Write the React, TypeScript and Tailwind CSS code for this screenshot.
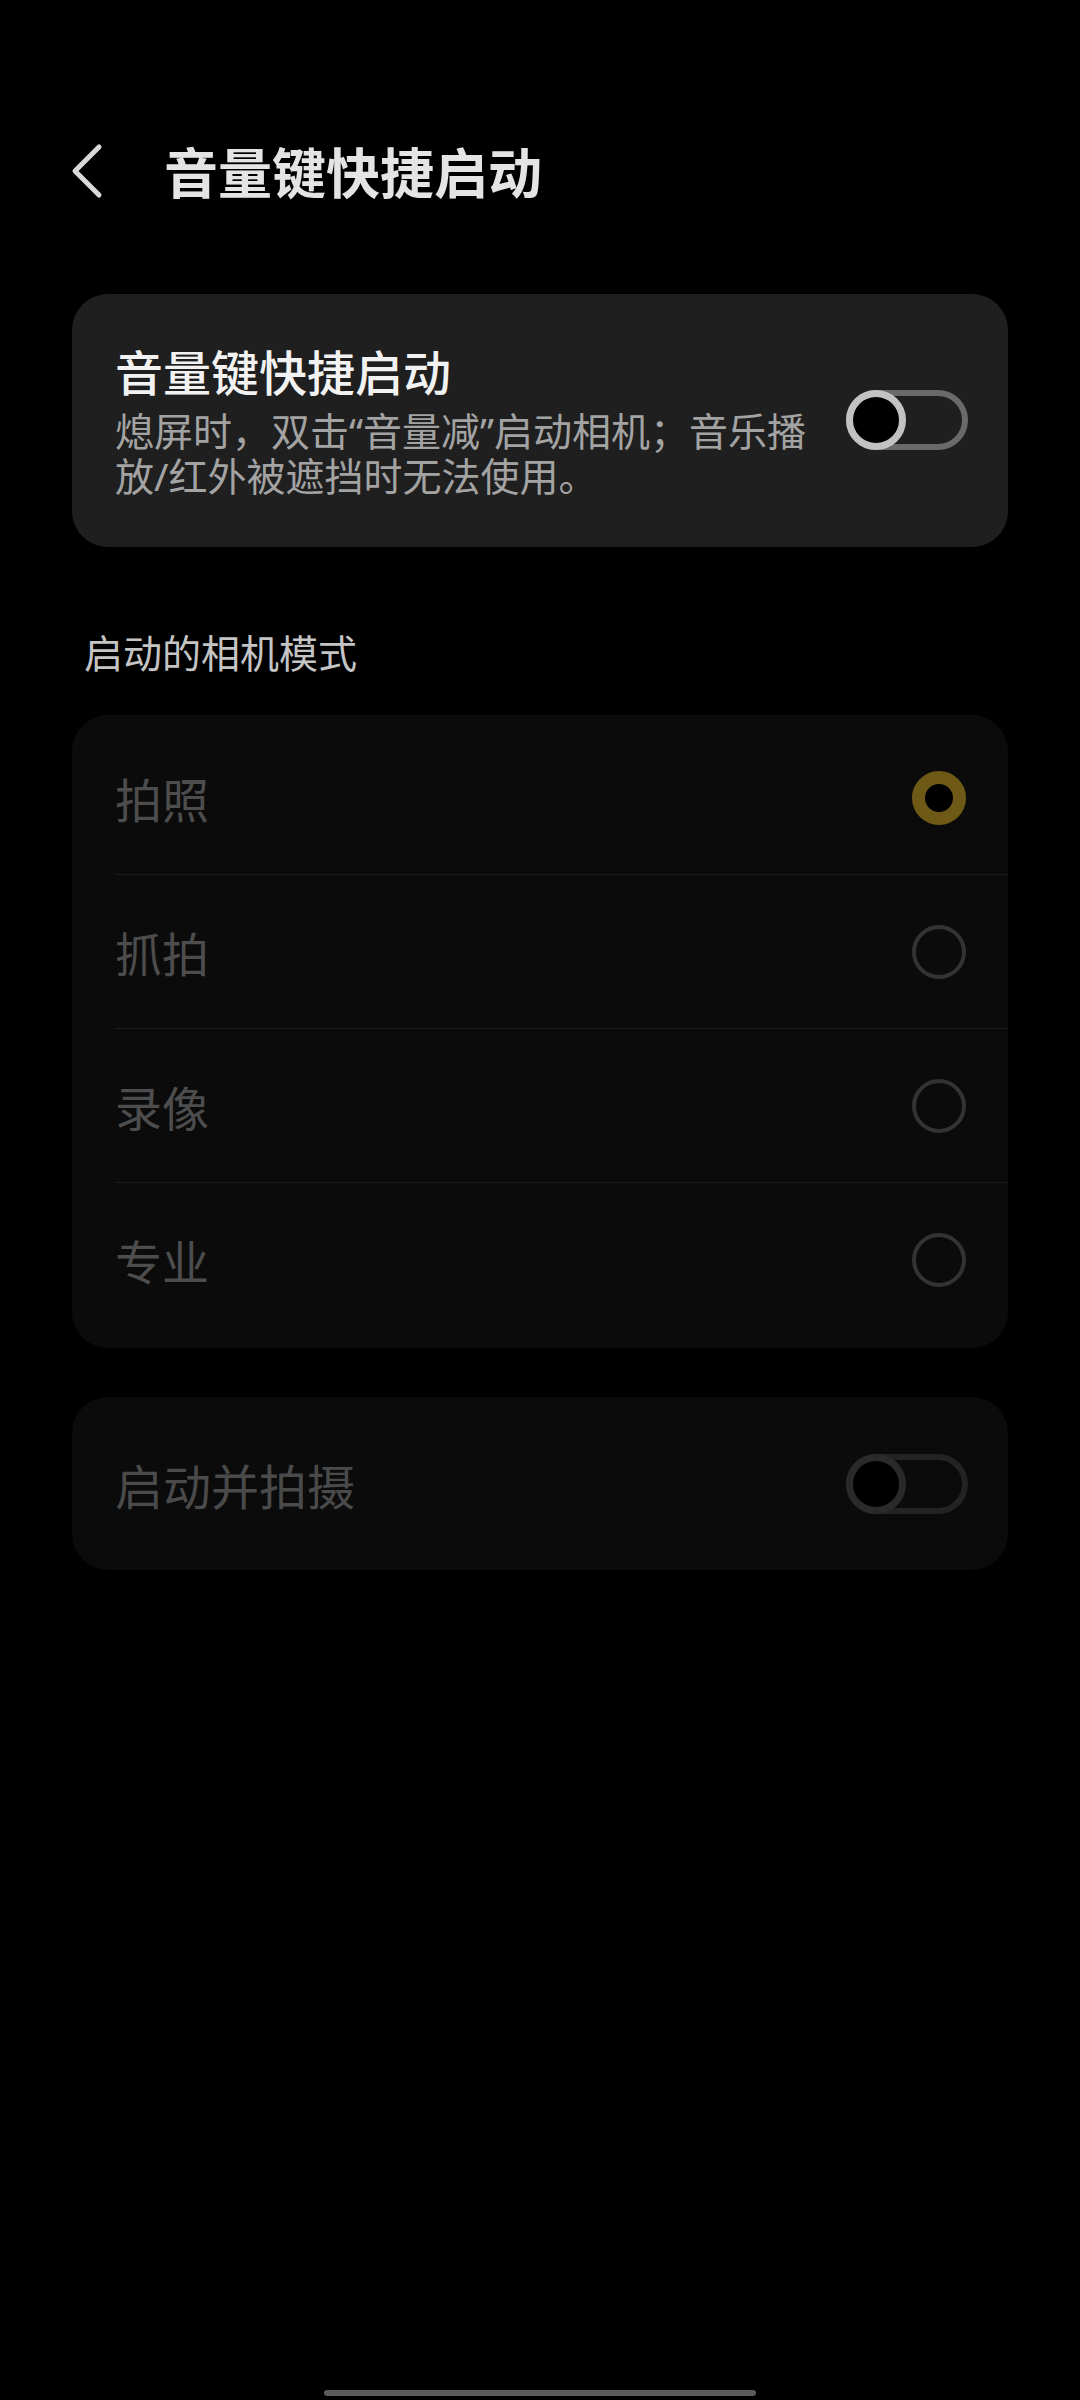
const font = { fontFamily: '"Noto Sans CJK SC", "Noto Sans", sans-serif' }
const descFont = { fontFamily: '"Noto Sans", "Noto Sans CJK SC", sans-serif' }

const modes = [
  { label: '拍照', selected: true },
  { label: '抓拍', selected: false },
  { label: '录像', selected: false },
  { label: '专业', selected: false },
]

function Toggle({ dim }: { dim?: boolean }) {
  return (
    <div
      className={`relative h-[60px] w-[122px] shrink-0 rounded-full border-[6px] ${
        dim ? 'border-[#232323]' : 'border-[#6a6a6a]'
      }`}
    >
      <div
        className={`absolute -left-[6px] -top-[6px] h-[60px] w-[60px] rounded-full border-[7px] bg-black ${
          dim ? 'border-[#2a2a2a]' : 'border-[#c2c2c2]'
        }`}
      />
    </div>
  )
}

function Radio({ selected }: { selected: boolean }) {
  return selected ? (
    <div className="h-[54px] w-[54px] rounded-full border-[13px] border-[#6e5a16] bg-black" />
  ) : (
    <div className="h-[54px] w-[54px] rounded-full border-[4px] border-[#333333]" />
  )
}

export default function App() {
  return (
    <div className="relative min-h-[2400px] w-[1080px] bg-black pt-[123px]" style={font}>
      <div className="flex h-[96px] items-center pl-[70px]">
        <svg width="34" height="56" viewBox="0 0 34 56" fill="none">
          <polyline
            points="29,4 5,28 29,52"
            stroke="#d9d9d9"
            strokeWidth="5"
            strokeLinecap="round"
            strokeLinejoin="round"
          />
        </svg>
        <h1 className="ml-[60px] text-[54px] font-bold leading-none text-[#e4e4e4]">音量键快捷启动</h1>
      </div>

      <div className="mx-[72px] mt-[75px] flex items-center justify-between rounded-[36px] bg-[#1f1f1f] pb-[49px] pl-[43px] pr-[40px] pt-[48px]">
        <div>
          <p className="text-[48px] font-medium leading-[56px] text-[#f2f2f2]">音量键快捷启动</p>
          <div className="mt-[10px] text-[39px] leading-[45px] text-[#a3a3a3]" style={descFont}>
            <p>熄屏时，双击“音量减”启动相机；音乐播</p>
            <p>放/红外被遮挡时无法使用。</p>
          </div>
        </div>
        <Toggle />
      </div>

      <p className="mt-[79px] pl-[84px] text-[39px] leading-[50px] text-[#c4c4c4]">启动的相机模式</p>

      <div className="mx-[72px] mt-[39px] rounded-[36px] bg-[#0b0b0b] pb-[12px] pt-[6px]">
        {modes.map((m, i) => (
          <div key={m.label} className="pl-[43px]">
            {i > 0 && <div className="h-px bg-[#1a1a1a]" />}
            <div className="flex h-[153px] items-center justify-between pr-[42px]">
              <span className="text-[47px] leading-none text-[#4d4d4d]">{m.label}</span>
              <Radio selected={m.selected} />
            </div>
          </div>
        ))}
      </div>

      <div className="mx-[72px] mt-[49px] flex h-[173px] items-center justify-between rounded-[36px] bg-[#0b0b0b] pl-[43px] pr-[40px]">
        <span className="text-[48px] leading-none text-[#4a4a4a]">启动并拍摄</span>
        <Toggle dim />
      </div>

      <div className="absolute bottom-[4px] left-[324px] h-[6px] w-[432px] rounded-full bg-[#5c5c5c]" />
    </div>
  )
}
